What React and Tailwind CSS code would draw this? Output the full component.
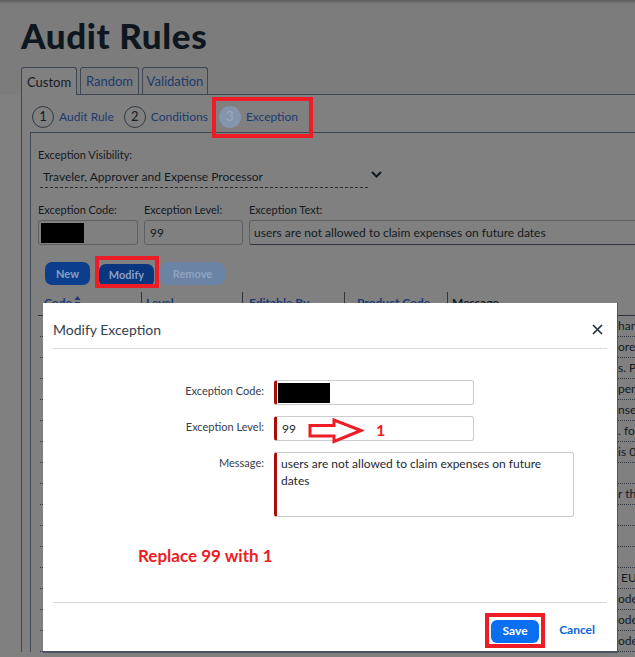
import React from "react";

const rows = [
  "han",
  "ore",
  "s. P",
  "pen",
  "nse",
  ". for",
  "is 0",
  "",
  "r tha",
  "",
  "",
  "",
  " EU",
  "ode",
  "ode",
  "ode",
];

function Step({ n, label, active }) {
  return (
    <div className="flex items-center">
      <span
        className={
          active
            ? "flex h-[22px] w-[22px] items-center justify-center rounded-full bg-[#8595ab] text-[13px] text-[#9aaac0]"
            : "flex h-[22px] w-[22px] items-center justify-center rounded-full border border-[#333a42] text-[13px] text-[#141a22]"
        }
      >
        {n}
      </span>
      <span className="ml-[5px] text-[12px] text-[#1c3a70]">{label}</span>
    </div>
  );
}

export default function App() {
  return (
    <div className="relative h-[657px] w-[635px] overflow-hidden bg-[#808080] font-['Lato',sans-serif] text-[#141a22]">
      {/* page header */}
      <div className="h-[95px] bg-[#7b7c7b]">
        <div className="h-[4px] bg-gradient-to-b from-[#5c5d5c] to-[#7b7c7b]" />
        <h1 className="mt-[11px] pl-[21px] text-[35px] font-black leading-[40px] tracking-[0.6px] text-[#0e1620]">
          Audit Rules
        </h1>
        <div className="ml-[21px] mt-[13px] flex h-[27px] items-end gap-[3px] border-b border-[#3e4753]">
          <div className="-mb-px flex h-[28px] w-[56px] items-center justify-center rounded-t-[3px] border border-b-0 border-[#3e4753] bg-[#808080] pt-[2px] text-[13px] text-[#141a22]">
            Custom
          </div>
          <div className="flex h-[27px] w-[59px] items-center justify-center rounded-t-[3px] border border-b-0 border-[#3e4753] pt-[2px] text-[13px] text-[#1c3a70]">
            Random
          </div>
          <div className="flex h-[27px] w-[66px] items-center justify-center rounded-t-[3px] border border-b-0 border-[#3e4753] pt-[2px] text-[13px] text-[#1c3a70]">
            Validation
          </div>
        </div>
      </div>

      {/* tab panel */}
      <div className="ml-[21px] border-l border-[#3e4753]">
        <div className="flex h-[37px] items-center gap-[10px] pl-[10px] pt-[7px]">
          <Step n="1" label="Audit Rule" />
          <Step n="2" label="Conditions" />
          <div className="relative ml-[1px]">
            <Step n="3" label="Exception" active />
            <span className="absolute -left-[7px] -right-[15px] -top-[9px] -bottom-[10px] border-[4px] border-[#ee1c25]" />
          </div>
        </div>

        <div className="ml-[8px] border-l border-t border-[#3e4753] pl-[7px] pt-[14px]">
          <div className="text-[11px] leading-[15px]">Exception Visibility:</div>
          <div className="mt-[4px] flex items-center">
            <div className="ml-[2px] flex h-[22px] w-[328px] items-center border-b border-dashed border-[#2a2f36] pl-[3px] text-[12px]">
              Traveler, Approver and Expense Processor
            </div>
            <svg className="ml-[3px] -mt-[5px]" width="11" height="7" viewBox="0 0 11 7">
              <path d="M1 1l4.5 4.5L10 1" fill="none" stroke="#141a22" strokeWidth="2" />
            </svg>
          </div>

          <div className="mt-[14px] flex gap-[6px]">
            <div className="w-[100px] shrink-0">
              <div className="text-[11px] leading-[15px]">Exception Code:</div>
              <div className="mt-[3px] flex h-[25px] items-center rounded-[3px] border border-[#5d6166] pl-[2px]">
                <div className="h-[20px] w-[43px] bg-black" />
              </div>
            </div>
            <div className="w-[99px] shrink-0">
              <div className="text-[11px] leading-[15px]">Exception Level:</div>
              <div className="mt-[3px] flex h-[25px] items-center rounded-[3px] border border-[#5d6166] pl-[5px] text-[12px]">
                99
              </div>
            </div>
            <div className="w-[420px] shrink-0">
              <div className="text-[11px] leading-[15px]">Exception Text:</div>
              <div className="mt-[3px] flex h-[25px] items-center whitespace-nowrap rounded-[3px] border border-b-[#2f353c] border-[#5d6166] pl-[4px] text-[12px]">
                users are not allowed to claim expenses on future dates
              </div>
            </div>
          </div>

          <div className="mt-[16px] flex items-center">
            <button className="ml-[7px] h-[23px] w-[45px] rounded-[7px] bg-[#0b3e8c] text-[11px] font-bold text-[#8aa0c2]">
              New
            </button>
            <div className="relative ml-[9px]">
              <button className="h-[23px] w-[55px] rounded-[7px] bg-[#0a3680] text-[11px] font-bold text-[#8aa0c2]">
                Modify
              </button>
              <span className="absolute -left-[4px] -right-[5px] -top-[5px] -bottom-[1px] border-[4px] border-[#ee1c25]" />
            </div>
            <button className="ml-[6px] h-[23px] w-[65px] rounded-[7px] bg-[#6b84a6] text-[11px] font-bold text-[#8fa3bf]">
              Remove
            </button>
          </div>

          {/* table */}
          <div className="mt-[5px] text-[12px]">
            <div className="flex h-[24px] border-b border-[#2f353c] pl-[2px]">
              <div className="flex w-[101px] items-start pl-[4px] pt-[2px] font-bold text-[#1c3a70]">
                Code
                <svg className="ml-[2px] mt-[2px]" width="7" height="10" viewBox="0 0 7 10">
                  <path d="M3.5 0L6.5 4H0.5z M3.5 10L6.5 6H0.5z" fill="#1c3a70" />
                </svg>
              </div>
              <div className="w-[101px] border-l border-[#2f353c] pl-[4px] pt-[2px] font-bold text-[#1c3a70]">Level</div>
              <div className="w-[102px] border-l border-[#2f353c] pl-[6px] pt-[2px] font-bold text-[#1c3a70]">Editable By</div>
              <div className="w-[103px] border-l border-[#2f353c] pl-[12px] pt-[2px] font-bold text-[#1c3a70]">Product Code</div>
              <div className="flex-1 border-l border-[#2f353c] pl-[4px] pt-[2px] font-bold">Message</div>
            </div>
            {rows.map((r, i) => (
              <div
                key={i}
                className="ml-[2px] flex h-[21px] items-center whitespace-pre border-b border-dotted border-[#2f353c]"
              >
                <div className="w-[578px] shrink-0" />
                <span className="text-[#141a22]">{r}</span>
              </div>
            ))}
          </div>
        </div>
      </div>

      {/* modal dialog */}
      <div className="absolute left-[43px] top-[303px] h-[350px] w-[575px] border-b-2 border-r border-[#4a5561] bg-white">
        <div className="flex h-[45px] items-center justify-between pl-[10px] pr-[14px] pt-[7px]">
          <span className="text-[14px] text-[#34404e]">Modify Exception</span>
          <svg width="11" height="11" viewBox="0 0 11 11">
            <path d="M1 1l9 9M10 1l-9 9" stroke="#1f2d3d" strokeWidth="1.6" />
          </svg>
        </div>
        <div className="mx-[10px] h-px bg-[#d9d9d9]" />

        <div className="pt-[31px] text-[12px] text-[#34404e]">
          <div className="flex">
            <div className="mr-[10px] w-[221px] pt-[3px] text-right text-[11px] leading-[15px]">Exception Code:</div>
            <div className="flex h-[25px] w-[200px] items-center rounded-[3px] border border-l-[3px] border-[#c8cbcf] border-l-[#a80c0c] pl-[1px]">
              <div className="h-[20px] w-[52px] bg-black" />
            </div>
          </div>
          <div className="mt-[11px] flex">
            <div className="mr-[10px] w-[221px] pt-[3px] text-right text-[11px] leading-[15px]">Exception Level:</div>
            <div className="relative flex h-[25px] w-[200px] items-center rounded-[3px] border border-l-[3px] border-[#c8cbcf] border-l-[#a80c0c] pl-[5px] text-[#1d2834]">
              99
              <svg className="absolute left-[31px] top-[1px]" width="56" height="26" viewBox="0 0 56 26">
                <polygon
                  points="2,7.5 26,7.5 26,2 53,12.5 26,23.5 26,18 2,18"
                  fill="white"
                  stroke="#ee1c25"
                  strokeWidth="3"
                  strokeLinejoin="miter"
                />
              </svg>
              <span className="absolute left-[99px] top-[1px] text-[16px] font-bold text-[#ee1c25]">1</span>
            </div>
          </div>
          <div className="mt-[11px] flex">
            <div className="mr-[10px] w-[221px] pt-[3px] text-right text-[11px] leading-[15px]">Message:</div>
            <div className="h-[65px] w-[300px] rounded-[3px] border border-l-[3px] border-[#c8cbcf] border-l-[#a80c0c] pl-[4px] pr-[12px] pt-[2px] leading-[17px] text-[#1d2834]">
              users are not allowed to claim expenses on future dates
            </div>
          </div>
          <div className="ml-[95px] mt-[28px] text-[17px] font-bold leading-[22px] text-[#ee1c25]">
            Replace 99 with 1
          </div>
        </div>

        <div className="mx-[10px] mt-[35px] h-px bg-[#d9d9d9]" />
        <div className="flex items-center justify-end pr-[22px] pt-[10px]">
          <div className="border-[4px] border-[#ee1c25] px-[2px] pb-[1px]">
            <button className="h-[23px] w-[48px] rounded-[6px] bg-[#0a6ef0] text-[12px] font-bold text-white">
              Save
            </button>
          </div>
          <span className="ml-[14px] text-[12px] font-bold text-[#0a64d9]">Cancel</span>
        </div>
      </div>
    </div>
  );
}
